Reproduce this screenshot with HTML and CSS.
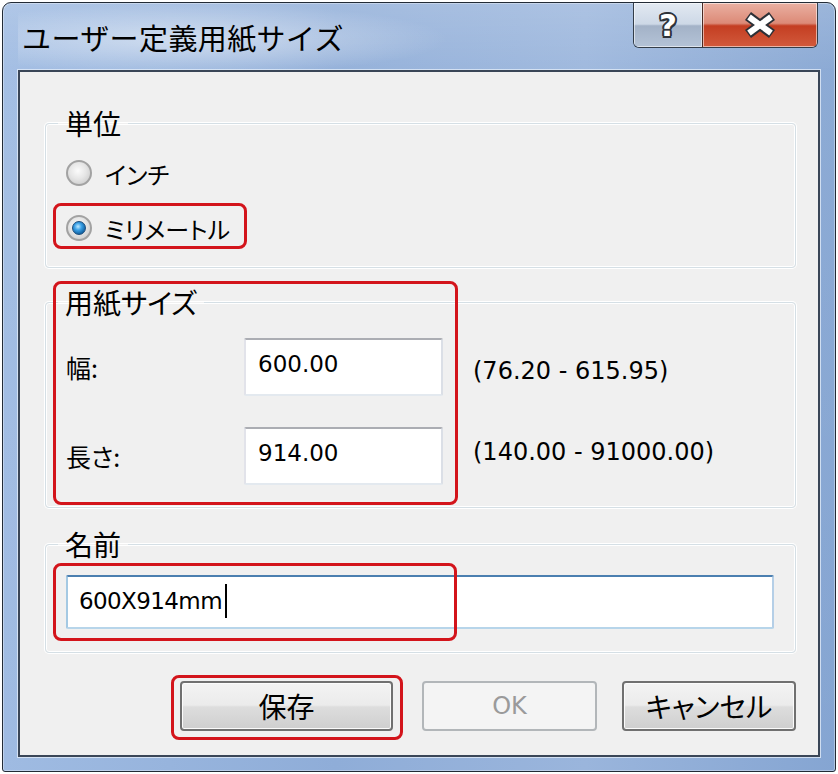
FILE: index.html
```html
<!DOCTYPE html>
<html lang="ja">
<head>
<meta charset="utf-8">
<title>ユーザー定義用紙サイズ</title>
<link rel="stylesheet" href="styles.css">
</head>
<body>
<div class="window">
  <div class="titlebar">
    <div class="title">ユーザー定義用紙サイズ</div>
    <div class="caption-buttons">
      <div class="cap-btn help"><span class="help-glyph">?</span></div>
      <div class="cap-btn close">
        <svg width="34" height="26" viewBox="0 0 34 26">
          <g stroke="#2b2f36" stroke-width="10" stroke-linecap="butt">
            <line x1="5" y1="4" x2="29" y2="22"/>
            <line x1="29" y1="4" x2="5" y2="22"/>
          </g>
          <g stroke="#ffffff" stroke-width="6" stroke-linecap="butt">
            <line x1="6" y1="5" x2="28" y2="21"/>
            <line x1="28" y1="5" x2="6" y2="21"/>
          </g>
        </svg>
      </div>
    </div>
  </div>
  <div class="client">
    <fieldset class="group group-unit">
      <legend>単位</legend>
      <div class="radio-row"><span class="radio"></span><span class="jp">インチ</span></div>
      <div class="radio-row"><span class="radio checked"></span><span class="jp">ミリメートル</span></div>
    </fieldset>
    <fieldset class="group group-size">
      <legend>用紙サイズ</legend>
      <div class="size-grid">
        <div class="field-label">幅:</div>
        <div class="textbox">600.00</div>
        <div class="range">(76.20 - 615.95)</div>
        <div class="field-label">長さ:</div>
        <div class="textbox">914.00</div>
        <div class="range">(140.00 - 91000.00)</div>
      </div>
    </fieldset>
    <fieldset class="group group-name">
      <legend>名前</legend>
      <div class="textbox focused">600X914mm<span class="caret"></span></div>
    </fieldset>
    <div class="button-row">
      <div class="btn btn-save">保存</div>
      <div class="btn btn-ok disabled">OK</div>
      <div class="btn btn-cancel">キャンセル</div>
    </div>
    <div class="mark mark-unit"></div>
    <div class="mark mark-size"></div>
    <div class="mark mark-name"></div>
    <div class="mark mark-save"></div>
  </div>
</div>
</body>
</html>
```
FILE: styles.css
```css
html, body {
  margin: 0;
  padding: 0;
  background: #ffffff;
}

body {
  font-family: "DejaVu Sans", "Noto Sans CJK JP", sans-serif;
  color: #000;
}

.window {
  margin: 2px 0 0 2px;
  width: 834px;
  height: 770px;
  box-sizing: border-box;
  border: 1px solid #222b36;
  border-radius: 9px 9px 3px 3px;
  background:
    linear-gradient(to bottom, rgba(255,255,255,0.18) 0, rgba(255,255,255,0.06) 67px, rgba(255,255,255,0) 100%),
    linear-gradient(to right, #9fbbe2 0%, #8fadd8 40%, #9ab5dc 70%, #85a5d2 100%);
  box-shadow: inset 0 0 0 1px rgba(255,255,255,0.35);
  padding: 0 15px 14px;
  display: flex;
  flex-direction: column;
}

.titlebar {
  height: 67px;
  flex: none;
  display: flex;
  justify-content: space-between;
  align-items: flex-start;
  background: radial-gradient(ellipse 260px 36px at 170px 36px, rgba(255,255,255,0.5), rgba(255,255,255,0));
}

.title {
  margin: 16px 0 0 4px;
  font-family: "Noto Sans CJK JP", sans-serif;
  font-size: 29px;
  line-height: 36px;
  color: #000;
  letter-spacing: 0.4px;
}

.caption-buttons {
  margin-right: 2px;
  display: flex;
  height: 45px;
  box-sizing: border-box;
  border: 1px solid #333d49;
  border-top: none;
  border-radius: 0 0 6px 6px;
  overflow: hidden;
}

.cap-btn {
  display: flex;
  align-items: center;
  justify-content: center;
  box-shadow: inset 0 0 0 1px rgba(255,255,255,0.55);
}

.help {
  width: 68px;
  background: linear-gradient(to bottom, #e2e9f2 0%, #cdd8e6 48%, #a3b2c7 52%, #b4c3d7 100%);
}

.help-glyph {
  font-family: "DejaVu Sans", sans-serif;
  font-weight: bold;
  font-size: 31px;
  line-height: 1;
  color: #fff;
  margin-top: 1px;
  text-shadow:
    2px 0 0 #2e333a, -2px 0 0 #2e333a, 0 2px 0 #2e333a, 0 -2px 0 #2e333a,
    1.5px 1.5px 0 #2e333a, -1.5px -1.5px 0 #2e333a, 1.5px -1.5px 0 #2e333a, -1.5px 1.5px 0 #2e333a;
}

.close {
  width: 114px;
  border-left: 1px solid #4a2a24;
  background: linear-gradient(to bottom, #eab0a2 0%, #dc8a77 46%, #c43e22 52%, #d25a3c 100%);
}

.close svg {
  display: block;
}

.client {
  flex: 1;
  position: relative;
  background: #f0f0f0;
  border: 2px solid #3a4657;
  box-shadow: 0 0 0 1px rgba(225,235,248,0.8);
  padding: 0 22px 0 25px;
  display: flex;
  flex-direction: column;
}

.group {
  margin: 0;
  border: 1px solid #d5dfe5;
  border-radius: 4px;
  box-shadow: inset 0 0 0 1px #ffffff, 0 0 0 1px #ffffff;
  padding: 0 20px;
  min-width: 0;
}

.group legend {
  margin-left: -8px;
  padding: 0 7px;
  font-family: "Noto Sans CJK JP", sans-serif;
  font-feature-settings: "palt";
  font-size: 28px;
  line-height: 32px;
}

.group-unit {
  margin-top: 35px;
  padding-top: 14px;
  padding-bottom: 19px;
  display: flex;
  flex-direction: column;
  gap: 15px;
}

.radio-row {
  height: 40px;
  display: flex;
  align-items: center;
}

.jp {
  font-family: "Noto Sans CJK JP", sans-serif;
  font-feature-settings: "palt";
  font-size: 24px;
}

.radio {
  width: 26px;
  height: 26px;
  box-sizing: border-box;
  margin-right: 13px;
  border-radius: 50%;
  border: 2px solid #a2a2a2;
  background: radial-gradient(circle at 45% 40%, #fbfbfb 0%, #e6e6e6 45%, #cfcfcf 80%, #dcdcdc 100%);
  display: flex;
  align-items: center;
  justify-content: center;
}

.radio.checked::after {
  content: "";
  width: 14px;
  height: 14px;
  box-sizing: border-box;
  border-radius: 50%;
  border: 1px solid #1b4c7c;
  background: radial-gradient(circle at 42% 38%, #bfe9ff 0%, #3aa0e6 35%, #10609f 75%, #0b3f70 100%);
}

.group-size {
  margin-top: 18px;
  padding-top: 20px;
  padding-bottom: 22px;
}

.size-grid {
  display: grid;
  grid-template-columns: 178px 199px auto;
  grid-auto-rows: 58px;
  row-gap: 31px;
  column-gap: 0;
  align-items: center;
}

.field-label {
  font-family: "Noto Sans CJK JP", sans-serif;
  font-feature-settings: "palt";
  font-size: 25px;
}

.textbox {
  height: 100%;
  box-sizing: border-box;
  background: #ffffff;
  border: 2px solid;
  border-color: #abadb3 #dbdfe6 #e3e9ef #e2e3ea;
  border-radius: 2px;
  padding-left: 12px;
  display: flex;
  align-items: center;
  font-size: 23px;
  padding-bottom: 6px;
}

.range {
  padding-left: 30px;
  font-size: 24px;
  padding-top: 8px;
}

.size-grid .range:last-child {
  padding-top: 0;
  margin-top: -8px;
}

.group-name {
  margin-top: 20px;
  padding-top: 15px;
  padding-bottom: 23px;
  padding-right: 21px;
}

.textbox.focused {
  height: 54px;
  padding-left: 11px;
  padding-bottom: 2px;
  border-color: #4b7fb0 #b5cfe7 #b7d5ea #a4c9e3;
  letter-spacing: -0.6px;
}

.caret {
  display: inline-block;
  width: 2px;
  height: 34px;
  margin-left: 3px;
  background: #000;
}

.button-row {
  margin-top: 28px;
  display: flex;
  justify-content: flex-end;
}

.btn {
  height: 50px;
  box-sizing: border-box;
  border: 2px solid #707070;
  border-radius: 4px;
  background: linear-gradient(to bottom, #f3f3f3 0%, #ebebeb 48%, #dddddd 52%, #cfcfcf 100%);
  box-shadow: inset 0 0 0 1px #fbfbfb;
  display: flex;
  align-items: center;
  justify-content: center;
  font-family: "Noto Sans CJK JP", sans-serif;
  font-feature-settings: "palt";
  font-size: 28px;
}

.btn-save {
  width: 213px;
}

.btn-ok {
  width: 175px;
  margin-left: 29px;
  font-family: "DejaVu Sans", sans-serif;
  font-size: 24px;
}

.btn-cancel {
  width: 174px;
  margin-left: 25px;
}

.btn.disabled {
  border-color: #b2b6b9;
  background: #f4f4f4;
  color: #9a9a9a;
  box-shadow: none;
}

.mark {
  position: absolute;
  box-sizing: border-box;
  border: 3px solid #d3141b;
  border-radius: 8px;
  pointer-events: none;
}

.mark-unit {
  left: 33px;
  top: 131px;
  width: 194px;
  height: 46px;
}

.mark-size {
  left: 33px;
  top: 209px;
  width: 405px;
  height: 224px;
}

.mark-name {
  left: 33px;
  top: 491px;
  width: 404px;
  height: 78px;
}

.mark-save {
  left: 151px;
  top: 603px;
  width: 232px;
  height: 65px;
}
```
